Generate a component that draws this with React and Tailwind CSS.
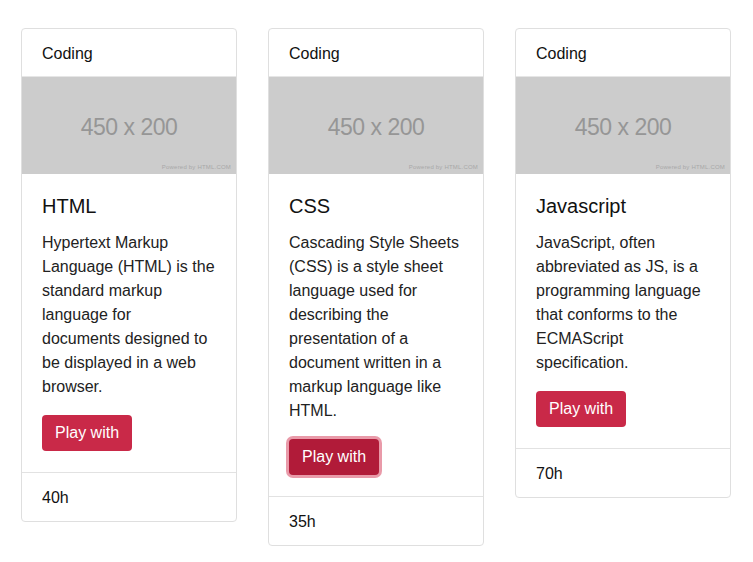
const courses = [
  {
    title: "HTML",
    text: "Hypertext Markup Language (HTML) is the standard markup language for documents\u00a0designed to be displayed in a web browser.",
    hours: "40h",
  },
  {
    title: "CSS",
    text: "Cascading Style Sheets (CSS) is a style sheet language used for describing the presentation of a document written in a markup language like HTML.",
    hours: "35h",
    focused: true,
  },
  {
    title: "Javascript",
    text: "JavaScript, often abbreviated as JS, is a programming language that conforms to the ECMAScript specification.",
    hours: "70h",
  },
];

function Placeholder() {
  return (
    <div className="relative flex h-[97px] items-center justify-center bg-[#cccccc] pt-[4px]">
      <span className="text-[23px] tracking-[-0.5px] text-[#969696]">450 x 200</span>
      <span className="absolute bottom-[2px] right-[5px] text-[6px] tracking-[0.2px] text-[#a8a8a8]">
        Powered by HTML.COM
      </span>
    </div>
  );
}

function CourseCard({ course }) {
  return (
    <div className="flex w-[216px] flex-col rounded-[4px] border border-[#dfdfdf] bg-white">
      <div className="border-b border-[#e6e6e6] px-5 pb-[10px] pt-[13px] text-base leading-6 text-[#111]">
        Coding
      </div>
      <Placeholder />
      <div className="px-5 pb-[21px] pt-5">
        <h5 className="mb-[13px] text-xl leading-6 text-[#111]">{course.title}</h5>
        <p className="mb-4 text-base leading-6 text-[#222]">{course.text}</p>
        <button
          className={
            course.focused
              ? "rounded-[4px] bg-[#b11b39] px-[13px] py-[6px] text-base leading-6 text-white shadow-[0_0_0_3px_rgba(226,120,140,0.75)]"
              : "rounded-[4px] bg-[#c92948] px-[13px] py-[6px] text-base leading-6 text-white"
          }
          type="button"
        >
          Play with
        </button>
      </div>
      <div className="border-t border-[#e2e2e2] px-5 pb-[11px] pt-[13px] text-base leading-6 text-[#111]">
        {course.hours}
      </div>
    </div>
  );
}

export default function App() {
  return (
    <div className="min-h-[562px] bg-white pl-[21px] pt-[28px] font-['Liberation_Sans',Arial,sans-serif]">
      <div className="flex items-start gap-[31px]">
        {courses.map((course) => (
          <CourseCard course={course} key={course.title} />
        ))}
      </div>
    </div>
  );
}
